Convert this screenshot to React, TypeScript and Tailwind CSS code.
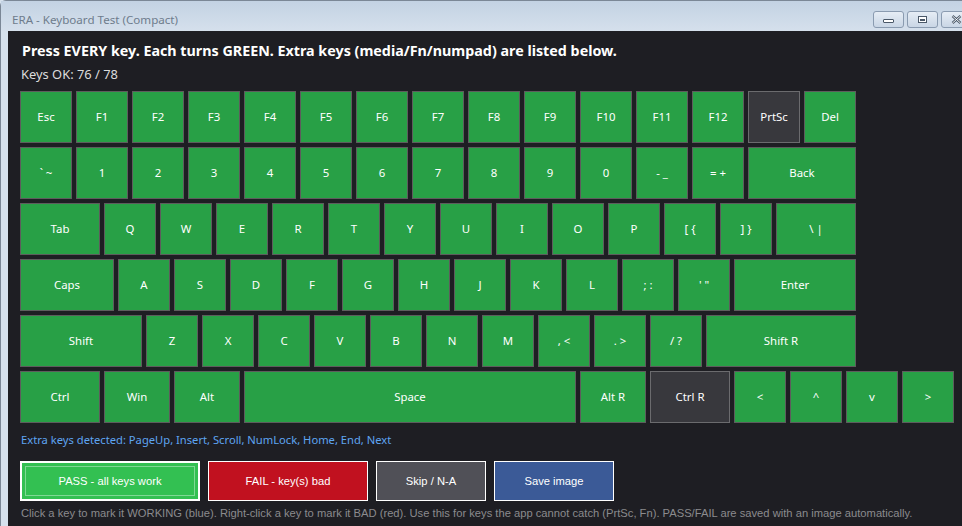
import React from 'react';

type K = { label: string; w?: number; dark?: boolean };

const U = 56;
const keyWidth = (w = 1) => Math.round(w * U - 4);

const rows: K[][] = [
  [
    { label: 'Esc' },
    { label: 'F1' }, { label: 'F2' }, { label: 'F3' }, { label: 'F4' },
    { label: 'F5' }, { label: 'F6' }, { label: 'F7' }, { label: 'F8' },
    { label: 'F9' }, { label: 'F10' }, { label: 'F11' }, { label: 'F12' },
    { label: 'PrtSc', dark: true },
    { label: 'Del' },
  ],
  [
    { label: '` ~' },
    { label: '1' }, { label: '2' }, { label: '3' }, { label: '4' }, { label: '5' },
    { label: '6' }, { label: '7' }, { label: '8' }, { label: '9' }, { label: '0' },
    { label: '- _' }, { label: '= +' },
    { label: 'Back', w: 2 },
  ],
  [
    { label: 'Tab', w: 1.5 },
    { label: 'Q' }, { label: 'W' }, { label: 'E' }, { label: 'R' }, { label: 'T' },
    { label: 'Y' }, { label: 'U' }, { label: 'I' }, { label: 'O' }, { label: 'P' },
    { label: '[ {' }, { label: '] }' },
    { label: '\\ |', w: 1.5 },
  ],
  [
    { label: 'Caps', w: 1.75 },
    { label: 'A' }, { label: 'S' }, { label: 'D' }, { label: 'F' }, { label: 'G' },
    { label: 'H' }, { label: 'J' }, { label: 'K' }, { label: 'L' },
    { label: '; :' }, { label: "' \"" },
    { label: 'Enter', w: 2.25 },
  ],
  [
    { label: 'Shift', w: 2.25 },
    { label: 'Z' }, { label: 'X' }, { label: 'C' }, { label: 'V' }, { label: 'B' },
    { label: 'N' }, { label: 'M' },
    { label: ', <' }, { label: '. >' }, { label: '/ ?' },
    { label: 'Shift R', w: 2.75 },
  ],
  [
    { label: 'Ctrl', w: 1.5 },
    { label: 'Win', w: 1.25 },
    { label: 'Alt', w: 1.25 },
    { label: 'Space', w: 6 },
    { label: 'Alt R', w: 1.25 },
    { label: 'Ctrl R', w: 1.5, dark: true },
    { label: '<' }, { label: '^' }, { label: 'v' }, { label: '>' },
  ],
];

function Key({ k }: { k: K }) {
  return (
    <div
      style={{ width: keyWidth(k.w) }}
      className={
        'h-[52px] shrink-0 flex items-center justify-center text-[11.4px] text-white border ' +
        (k.dark ? 'bg-[#38383d] border-[#6b6b6e]' : 'bg-[#28a046] border-[#5d5d5d]')
      }
    >
      {k.label}
    </div>
  );
}

function TitleButton({ children }: { children: React.ReactNode }) {
  return (
    <div className="w-[31px] h-[17px] rounded-[3px] border border-[#8a9bb0] bg-gradient-to-b from-[#e6edf5] to-[#c9d6e5] flex items-center justify-center">
      {children}
    </div>
  );
}

export default function App() {
  return (
    <div className="w-[962px] h-[526px] overflow-hidden bg-[#d6e1ed] font-['Noto_Sans',sans-serif]">
      <div className="h-full rounded-tl-[6px] border-t border-l border-[#7b8796] bg-[#d6e1ed] flex flex-col">
        {/* title bar */}
        <div className="h-[30px] shrink-0 flex items-start bg-gradient-to-b from-[#c3d2e3] to-[#d5e0ec]">
          <div className="pl-[11px] pt-[12px] text-[11.6px] leading-[14px] text-[#6e7c8c]">
            ERA - Keyboard Test (Compact)
          </div>
          <div className="ml-auto flex gap-[3px] pt-[10px] -mr-[10px]">
            <TitleButton>
              <div className="w-[11px] h-[4px] rounded-[1px] border border-[#4a5868] bg-white mt-[3px]" />
            </TitleButton>
            <TitleButton>
              <div className="w-[9px] h-[7px] border border-[#4a5868] bg-white flex items-center justify-center">
                <div className="w-[5px] h-[2px] border border-[#4a5868]" />
              </div>
            </TitleButton>
            <TitleButton>
              <svg width="11" height="9" viewBox="0 0 11 9">
                <path d="M1.5 1 L9.5 8 M9.5 1 L1.5 8" stroke="#4a5868" strokeWidth="2.4" />
                <path d="M1.5 1 L9.5 8 M9.5 1 L1.5 8" stroke="#ffffff" strokeWidth="0.9" />
              </svg>
            </TitleButton>
          </div>
        </div>

        {/* body */}
        <div className="flex-1 flex pl-[7px]">
          <div className="flex-1 bg-[#1e1e23] pl-[12px] flex flex-col">
            <div className="mt-[10px] h-[20px] leading-[20px] pl-[2px] text-[14.3px] font-bold text-white whitespace-nowrap">
              Press EVERY key. Each turns GREEN. Extra keys (media/Fn/numpad) are listed below.
            </div>
            <div className="mt-[5px] h-[16px] leading-[16px] pl-[1px] text-[12.9px] text-[#dcdcdc]">
              Keys OK: 76 / 78
            </div>
            <div className="mt-[9px] flex flex-col gap-[4px]">
              {rows.map((row, i) => (
                <div key={i} className="flex gap-[4px]">
                  {row.map((k) => (
                    <Key key={k.label} k={k} />
                  ))}
                </div>
              ))}
            </div>
            <div className="mt-[9px] h-[16px] leading-[16px] pl-[1px] text-[11.2px] text-[#5ea5f2] whitespace-nowrap">
              Extra keys detected: PageUp, Insert, Scroll, NumLock, Home, End, Next
            </div>
            <div className="mt-[13px] flex gap-[8px] font-['Liberation_Sans',Arial,sans-serif] text-[11.2px] text-white">
              <div className="w-[180px] h-[40px] border-2 border-white bg-[#33c052] p-[3px]">
                <div className="w-full h-full border border-[#80d895] flex items-center justify-center">
                  PASS - all keys work
                </div>
              </div>
              <div className="w-[160px] h-[40px] border border-white bg-[#c1111f] flex items-center justify-center">
                FAIL - key(s) bad
              </div>
              <div className="w-[110px] h-[40px] border border-white bg-[#505057] flex items-center justify-center">
                Skip / N-A
              </div>
              <div className="w-[120px] h-[40px] border border-white bg-[#3b5a97] flex items-center justify-center">
                Save image
              </div>
            </div>
            <div className="mt-[4px] h-[16px] leading-[16px] pl-[1px] whitespace-nowrap font-['Liberation_Sans',Arial,sans-serif] text-[11.2px] text-[#8b8b8e]">
              Click a key to mark it WORKING (blue). Right-click a key to mark it BAD (red). Use this for keys the app cannot catch (PrtSc, Fn). PASS/FAIL are saved with an image automatically.
            </div>
          </div>
        </div>
      </div>
    </div>
  );
}
